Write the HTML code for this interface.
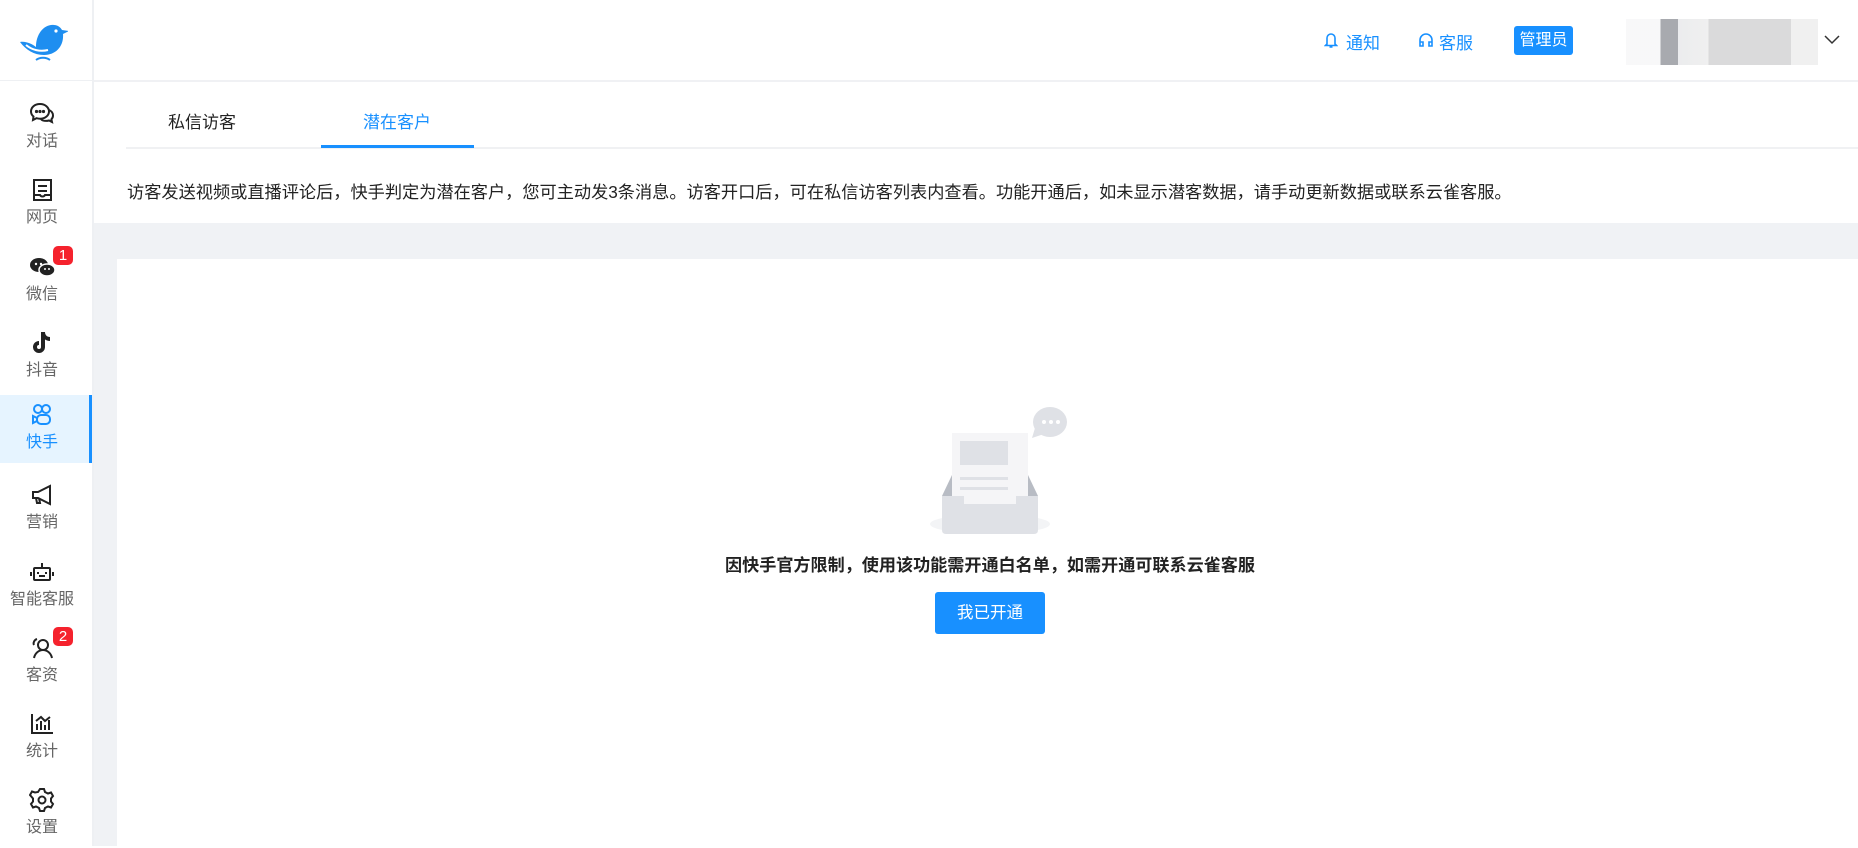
<!DOCTYPE html>
<html><head><meta charset="utf-8"><style>
*{margin:0;padding:0;box-sizing:border-box}
body{width:1858px;height:846px;overflow:hidden;background:#fff;font-family:"Liberation Sans","Noto Sans CJK SC",sans-serif;position:relative}
.side{position:absolute;left:0;top:0;width:94px;height:846px;background:#fff;border-right:2px solid #eef0f3}
.logo{position:absolute;left:0;top:0;width:92px;height:81px;border-bottom:1px solid #eef0f3}
.item{position:absolute;left:0;width:92px;height:68px;color:#666;font-size:16px}
.item svg{position:absolute;left:29px;top:8px}
.item span{position:absolute;left:0;width:84px;text-align:center;top:33px}
.item.act{background:#e6f4ff;color:#1890ff;border-right:3px solid #1890ff}
.badge{position:absolute;left:53px;top:-1px;width:20px;height:19px;background:#f5222d;color:#fff;border-radius:5px;font-size:15px;line-height:19px;text-align:center}
.hdr{position:absolute;left:94px;top:0;right:0;height:82px;border-bottom:2px solid #f0f1f4;background:#fff}
.gray{position:absolute;left:94px;top:223px;right:0;bottom:0;background:#f0f2f5}
.card{position:absolute;left:117px;top:259px;right:0;bottom:0;background:#fff}
</style></head><body>
<div class="side">
<div class="logo"><svg width="50" height="42" viewBox="0 0 50 42" style="position:absolute;left:18px;top:22px"><path d="M2 20 C8 19 14 22 18 25 C18 12 26 2 36 3 C40 3 43 6 44 8 L51 9 L45 12 C46 24 38 33 26 33 C16 33 8 28 2 20Z" fill="#1e8ef0"/><path d="M8 23 C14 28 22 30 30 28" stroke="#fff" stroke-width="2" fill="none"/><circle cx="38" cy="9" r="1.6" fill="#fff"/><path d="M18 38 C22 35 28 35 32 38" stroke="#1e8ef0" stroke-width="2" fill="none"/></svg></div>
<div class="item" style="top:94px"><svg width="26" height="24" viewBox="0 0 26 24" fill="none" stroke="#222" stroke-width="2"><path d="M11 2C5.5 2 2 5.5 2 9.5c0 2 1 3.8 2.5 5L4 18l3.5-1.8c1 .3 2.2.5 3.5.5 5.5 0 9-3.5 9-7.2S16.5 2 11 2z"/><path d="M20 8c2.5 1 4 3 4 5.5 0 1.5-.6 2.8-1.6 3.8L23 20l-3-1.5c-1 .3-2 .4-3 .4-2 0-4-.6-5-1.8"/><circle cx="7.5" cy="9.5" r=".6" fill="#222"/><circle cx="11" cy="9.5" r=".6" fill="#222"/><circle cx="14.5" cy="9.5" r=".6" fill="#222"/></svg><span>对话</span></div>
<div class="item" style="top:170px"><svg width="26" height="24" viewBox="0 0 26 24" fill="none" stroke="#222" stroke-width="2"><rect x="5" y="2" width="17" height="20"/><path d="M9 8h9M9 13h9M5 17h6c1 2 4 2 5 0h6"/></svg><span>网页</span></div>
<div class="item" style="top:247px"><svg width="28" height="24" viewBox="0 0 28 24"><ellipse cx="10" cy="10" rx="9" ry="7" fill="#222"/><ellipse cx="18" cy="15" rx="8" ry="6" fill="#222" stroke="#fff" stroke-width="1.5"/><circle cx="7" cy="9" r="1.2" fill="#fff"/><circle cx="12" cy="9" r="1.2" fill="#fff"/><circle cx="16" cy="14" r="1" fill="#fff"/><circle cx="20" cy="14" r="1" fill="#fff"/></svg><span>微信</span><div class="badge">1</div></div>
<div class="item" style="top:323px"><svg width="26" height="24" viewBox="0 0 26 24"><path d="M12 1h4c0 3 2 5 5 5v4c-2 0-4-.7-5-1.6V16a6 6 0 1 1-6-6v4a2 2 0 1 0 2 2z" fill="#222"/></svg><span>抖音</span></div>
<div class="item act" style="top:395px"><svg width="26" height="24" viewBox="0 0 26 24" fill="none" stroke="#1890ff" stroke-width="2"><circle cx="9" cy="6" r="4"/><circle cx="17" cy="6" r="4"/><rect x="8" y="12" width="13" height="9" rx="4"/><path d="M8 15l-4-2v7l4-2"/></svg><span>快手</span></div>
<div class="item" style="top:475px"><svg width="26" height="24" viewBox="0 0 26 24" fill="none" stroke="#222" stroke-width="2"><path d="M4 9h5l12-6v18L9 15H4z"/><path d="M7 15l1 5h3l-1-5"/></svg><span>营销</span></div>
<div class="item" style="top:552px"><svg width="26" height="24" viewBox="0 0 26 24" fill="none" stroke="#222" stroke-width="2"><rect x="5" y="8" width="16" height="12" rx="1"/><path d="M13 3v5M2 12v4M24 12v4M9 12v2M17 12v2M10 16h6"/></svg><span>智能客服</span></div>
<div class="item" style="top:628px"><svg width="26" height="24" viewBox="0 0 26 24" fill="none" stroke="#222" stroke-width="2"><circle cx="14" cy="9" r="5"/><path d="M5 22c1-5 5-8 9-8s8 3 9 8M8 3c-3 1-4 4-3 6"/></svg><span>客资</span><div class="badge">2</div></div>
<div class="item" style="top:704px"><svg width="26" height="24" viewBox="0 0 26 24" fill="none" stroke="#222" stroke-width="2"><path d="M3 2v19h21M8 18v-6M12 18V9M16 18v-5M20 18V8M7 9l5-4 4 4 5-4"/></svg><span>统计</span></div>
<div class="item" style="top:780px"><svg width="26" height="24" viewBox="0 0 26 24" fill="none" stroke="#222" stroke-width="2"><path d="M11 1h4l1 3 3 1.5 3-1 2 3.5-2 2.5v3l2 2.5-2 3.5-3-1-3 1.5-1 3h-4l-1-3-3-1.5-3 1-2-3.5 2-2.5v-3L1 7l2-3.5 3 1L9 4z"/><circle cx="13" cy="12" r="3.5"/></svg><span>设置</span></div>
</div>
<div class="hdr">
<svg width="14" height="18" viewBox="0 0 14 18" style="position:absolute;left:1230px;top:31px" fill="none" stroke="#1890ff" stroke-width="1.6"><path d="M3 13V7a4 4 0 0 1 8 0v6l1.5 1.5h-11z M5.5 16h3"/></svg>
<div style="position:absolute;left:1252px;top:29px;font-size:17px;color:#1890ff">通知</div>
<svg width="16" height="16" viewBox="0 0 16 16" style="position:absolute;left:1324px;top:32px" fill="none" stroke="#1890ff" stroke-width="1.6"><path d="M2 13V8a6 6 0 0 1 12 0v5M2 10h3v4H2zM11 10h3v4h-3z"/></svg>
<div style="position:absolute;left:1345px;top:29px;font-size:17px;color:#1890ff">客服</div>
<div style="position:absolute;left:1420px;top:26px;width:59px;height:29px;background:#1890ff;border-radius:3px;color:#fff;font-size:16px;line-height:29px;text-align:center">管理员</div>
<div style="position:absolute;left:1532px;top:19px;width:192px;height:46px;background:linear-gradient(90deg,#f7f7f8 0,#f7f7f8 18%,#9ea1a6 18%,#9ea1a6 27%,#e9eaec 27%,#eee 43%,#d6d6d7 43%,#d6d6d7 86%,#eee 86%,#eee 100%);opacity:.9"></div>
<svg width="16" height="10" viewBox="0 0 16 10" style="position:absolute;left:1730px;top:35px" fill="none" stroke="#333" stroke-width="1.5"><path d="M1 1l7 7 7-7"/></svg>
</div>
<div style="position:absolute;left:126px;top:147px;right:0;height:2px;background:#f0f1f3"></div>
<div style="position:absolute;left:168px;top:108px;font-size:17px;color:#222">私信访客</div>
<div style="position:absolute;left:363px;top:108px;font-size:17px;color:#1890ff">潜在客户</div>
<div style="position:absolute;left:321px;top:145px;width:153px;height:3px;background:#1890ff"></div>
<div style="position:absolute;left:127px;top:178px;font-size:17.2px;color:#222;white-space:nowrap">访客发送视频或直播评论后，快手判定为潜在客户，您可主动发3条消息。访客开口后，可在私信访客列表内查看。功能开通后，如未显示潜客数据，请手动更新数据或联系云雀客服。</div>
<div class="gray"></div>
<div class="card"></div>
<svg width="150" height="136" viewBox="0 0 150 136" style="position:absolute;left:920px;top:400px">
<ellipse cx="70" cy="124" rx="60" ry="10" fill="#f3f4f6"/>
<path d="M22 96 L32 75 L108 75 L118 96Z" fill="#b8bcc4"/>
<rect x="32" y="33" width="76" height="80" fill="#f5f5f7"/>
<rect x="40" y="41" width="48" height="24" fill="#dfe1e6"/>
<rect x="40" y="77" width="48" height="3" fill="#dfe1e6"/>
<rect x="40" y="87" width="48" height="3" fill="#dfe1e6"/>
<path d="M22 96 H44 V104 H96 V96 H118 V130 Q118 134 114 134 H26 Q22 134 22 130Z" fill="#dfe1e6"/>
<ellipse cx="130" cy="22" rx="17" ry="15" fill="#dfe1e6"/>
<path d="M115 28 L112 38 L124 34Z" fill="#dfe1e6"/>
<circle cx="124" cy="22" r="2" fill="#fff"/><circle cx="131" cy="22" r="2" fill="#fff"/><circle cx="138" cy="22" r="2" fill="#fff"/>
</svg>
<div style="position:absolute;left:0;width:1980px;top:551px;text-align:center;font-size:17.1px;font-weight:bold;color:#222">因快手官方限制，使用该功能需开通白名单，如需开通可联系云雀客服</div>
<div style="position:absolute;left:935px;top:592px;width:110px;height:42px;background:#1890ff;border-radius:3px;color:#fff;font-size:16.5px;line-height:42px;text-align:center">我已开通</div>
</body></html>
